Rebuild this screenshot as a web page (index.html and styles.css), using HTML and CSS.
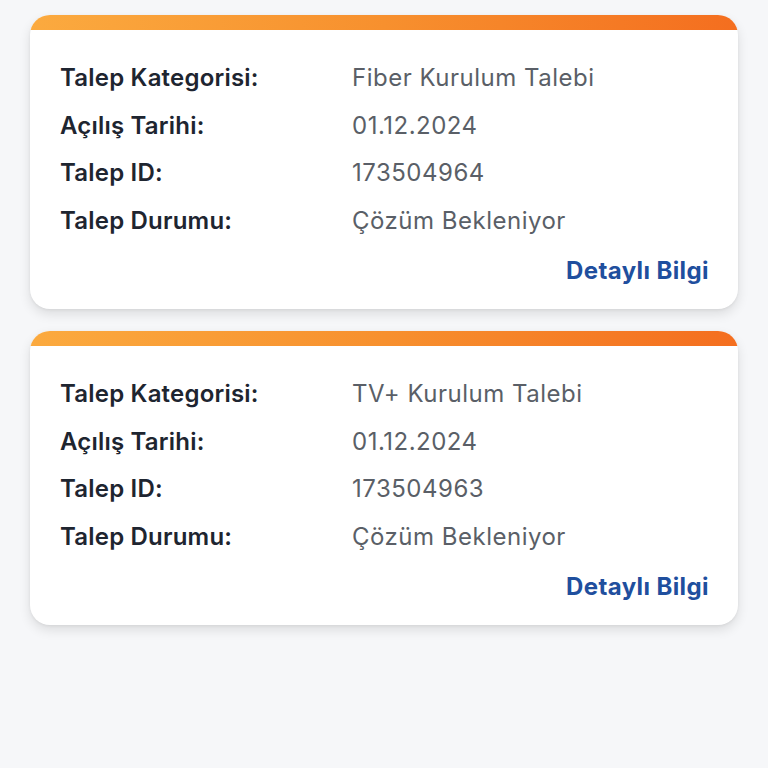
FILE: index.html
```html
<!DOCTYPE html>
<html lang="tr">
<head>
<meta charset="utf-8">
<link rel="stylesheet" href="styles.css">
</head>
<body>
<main class="list">
  <section class="card">
    <div class="card-bar"></div>
    <div class="card-body">
      <dl class="rows">
        <dt>Talep Kategorisi:</dt><dd>Fiber Kurulum Talebi</dd>
        <dt>Açılış Tarihi:</dt><dd>01.12.2024</dd>
        <dt>Talep ID:</dt><dd>173504964</dd>
        <dt>Talep Durumu:</dt><dd>Çözüm Bekleniyor</dd>
      </dl>
      <div class="actions"><a class="more">Detaylı Bilgi</a></div>
    </div>
  </section>
  <section class="card">
    <div class="card-bar"></div>
    <div class="card-body">
      <dl class="rows">
        <dt>Talep Kategorisi:</dt><dd>TV+ Kurulum Talebi</dd>
        <dt>Açılış Tarihi:</dt><dd>01.12.2024</dd>
        <dt>Talep ID:</dt><dd>173504963</dd>
        <dt>Talep Durumu:</dt><dd>Çözüm Bekleniyor</dd>
      </dl>
      <div class="actions"><a class="more">Detaylı Bilgi</a></div>
    </div>
  </section>
</main>
</body>
</html>
```

FILE: styles.css
```css
html, body {
  margin: 0;
  padding: 0;
  background: #f6f7f9;
  height: 100%;
}
body {
  font-family: "Inter", "Lato", sans-serif;
  -webkit-font-smoothing: antialiased;
}
.list {
  display: flex;
  flex-direction: column;
  gap: 22px;
  padding: 15px 30px 0 30px;
}
.card {
  background: #ffffff;
  border-radius: 20px;
  overflow: hidden;
  box-shadow: 0 5px 12px rgba(0, 0, 0, 0.11), 0 1px 3px rgba(0, 0, 0, 0.06);
  height: 294px;
  display: flex;
  flex-direction: column;
}
.card-bar {
  height: 15px;
  background: linear-gradient(90deg, #fbaa3f 0%, #f7902e 50%, #f46e1f 100%);
  flex: none;
}
.card-body {
  padding: 24px 29px 0 30px;
  display: flex;
  flex-direction: column;
}
.rows {
  margin: 0;
  display: grid;
  grid-template-columns: 292px 1fr;
  grid-auto-rows: 47.5px;
  align-items: center;
}
.rows dt {
  font-weight: 600;
  font-size: 24px;
  letter-spacing: 0.2px;
  color: #1e2530;
}
.rows dd {
  margin: 0;
  font-size: 24px;
  letter-spacing: 0.5px;
  color: #5a5f67;
}
.actions {
  display: flex;
  justify-content: flex-end;
  height: 52px;
  align-items: center;
}
.more {
  font-weight: 700;
  font-size: 24px;
  letter-spacing: 0.4px;
  color: #1f4f9e;
}
```
